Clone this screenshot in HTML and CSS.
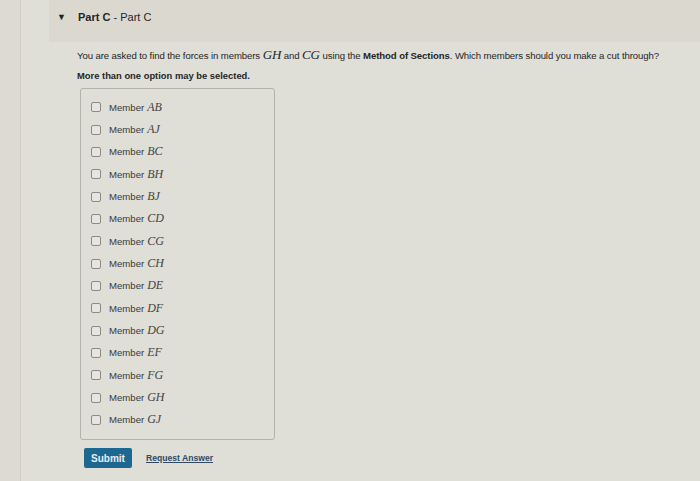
FILE: index.html
```html
<!DOCTYPE html>
<html lang="en">
<head>
    <meta charset="UTF-8">
    <title>Part C</title>
    <link rel="stylesheet" href="styles.css">
</head>
<body>
    <div class="page">
        <div class="partHead">
            <span class="caret">&#9660;</span>
            <h2><b>Part C</b> - Part C</h2>
        </div>

        <div class="partBody">
            <p class="question">You are asked to find the forces in members <i class="m">GH</i> and <i class="m">CG</i> using the <b>Method of Sections</b>. Which members should you make a cut through?</p>
            <p class="hint">More than one option may be selected.</p>

            <div class="choices">
                <label class="choice"><span class="box"></span>Member <i class="m">AB</i></label>
                <label class="choice"><span class="box"></span>Member <i class="m">AJ</i></label>
                <label class="choice"><span class="box"></span>Member <i class="m">BC</i></label>
                <label class="choice"><span class="box"></span>Member <i class="m">BH</i></label>
                <label class="choice"><span class="box"></span>Member <i class="m">BJ</i></label>
                <label class="choice"><span class="box"></span>Member <i class="m">CD</i></label>
                <label class="choice"><span class="box"></span>Member <i class="m">CG</i></label>
                <label class="choice"><span class="box"></span>Member <i class="m">CH</i></label>
                <label class="choice"><span class="box"></span>Member <i class="m">DE</i></label>
                <label class="choice"><span class="box"></span>Member <i class="m">DF</i></label>
                <label class="choice"><span class="box"></span>Member <i class="m">DG</i></label>
                <label class="choice"><span class="box"></span>Member <i class="m">EF</i></label>
                <label class="choice"><span class="box"></span>Member <i class="m">FG</i></label>
                <label class="choice"><span class="box"></span>Member <i class="m">GH</i></label>
                <label class="choice"><span class="box"></span>Member <i class="m">GJ</i></label>
            </div>

            <div class="actions">
                <button class="submit">Submit</button>
                <a class="request" href="#">Request Answer</a>
            </div>
        </div>
    </div>
</body>
</html>
```

FILE: styles.css
```css
* {
    box-sizing: border-box;
    margin: 0;
    padding: 0;
}
body {
    background-color: #dcdad2;
    font-family: "Liberation Sans", Arial, sans-serif;
    color: #262626;
    height: 481px;
    overflow: hidden;
}
.page {
    margin-left: 20px;
    border-left: solid 1px #d0cec6;
    height: 481px;
    background-color: #dfded7;
}
.partHead {
    display: flex;
    align-items: center;
    height: 42px;
    margin-left: 28px;
    padding: 0 0 8px 8px;
    background-color: #dbd8d0;
}
.caret {
    font-size: 9px;
    color: #222;
    width: 21px;
}
.partHead h2 {
    font-size: 11px;
    font-weight: normal;
}
.partBody {
    padding: 5px 0 0 56px;
}
.m {
    font-family: "Liberation Serif", "Times New Roman", serif;
    font-style: italic;
    font-size: 13px;
}
.question {
    font-size: 9.6px;
    letter-spacing: -0.1px;
}
.hint {
    font-size: 9.4px;
    font-weight: bold;
    margin-top: 7px;
}
.choices {
    margin: 7px 0 0 3px;
    width: 195px;
    border: solid 1px #b4b2ab;
    border-radius: 3px;
    padding: 7px 0 8px 10px;
    display: flex;
    flex-direction: column;
}
.choice {
    display: flex;
    align-items: center;
    height: 22.35px;
    font-size: 9.6px;
    color: #3a3a3a;
}
.choice .box {
    width: 10px;
    height: 10px;
    border: solid 1px #8a8a86;
    border-radius: 2px;
    background-color: #e6e5df;
    margin-right: 8px;
}
.choice .m {
    margin-left: 3px;
    font-size: 12px;
    color: #444;
}
.actions {
    display: flex;
    align-items: center;
    gap: 14px;
    margin: 8px 0 0 7px;
}
.submit {
    background-color: #1d6890;
    color: #e8eef2;
    border: none;
    border-radius: 2px;
    font-family: "Liberation Sans", Arial, sans-serif;
    font-size: 10px;
    font-weight: bold;
    width: 48px;
    height: 20px;
}
.request {
    color: #2e4a66;
    font-size: 8.6px;
    font-weight: bold;
}
```
